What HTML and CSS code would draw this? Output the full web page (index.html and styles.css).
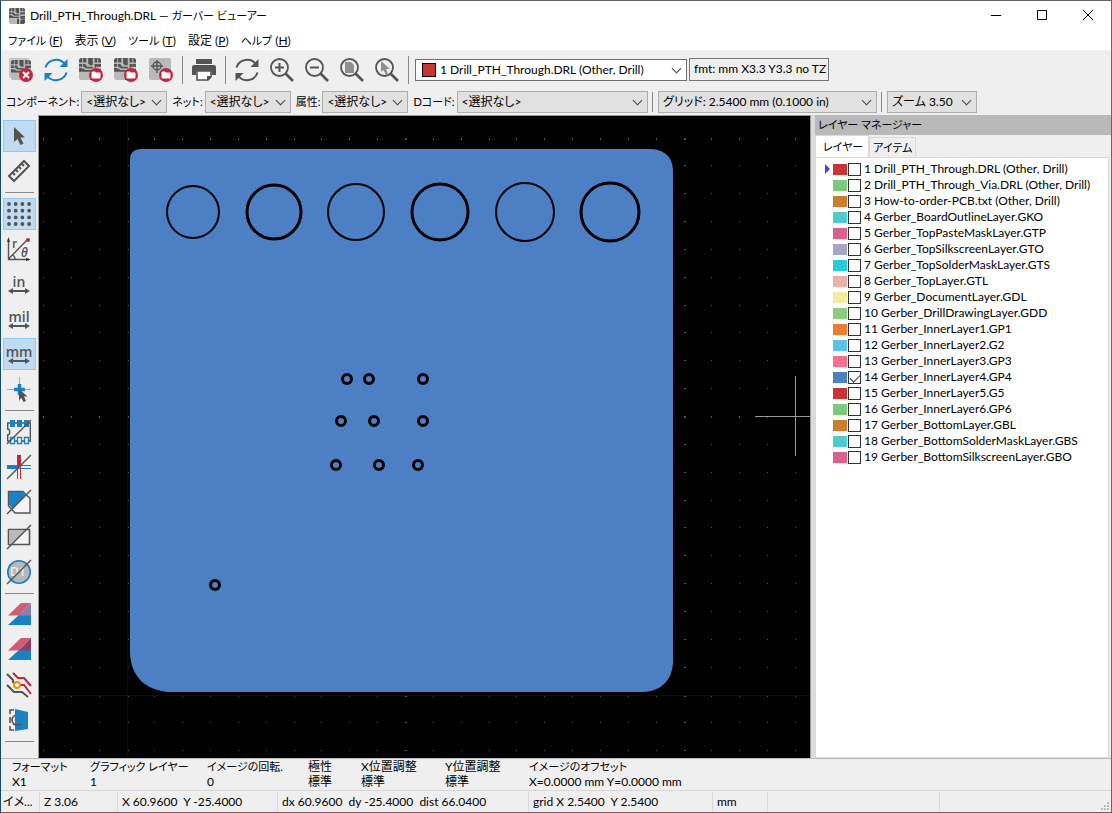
FILE: index.html
```
<!doctype html>
<html lang="ja">
<head>
	<meta charset="UTF-8">
	<title>Drill_PTH_Through.DRL — ガーバー ビューアー</title>
	<link rel="stylesheet" href="styles.css">
</head>
<body>
	<!-- shared icon shapes -->
	<svg class="defs" aria-hidden="true">
		<defs>
			<symbol id="board" viewBox="0 0 24 24">
				<rect width="24" height="24" rx="2.500" fill="#b9b9b9"/>
				<path fill="#545454" d="M2 0h6v5H0V2zM10 0h5v8h-3l-2-2zM17 0h5l2 2v3h-7zM0 6.500h7l2 3h6v2H8l-3-2H0zM17 6.500h7v3h-5l-2 2zM0 11h4l3 2h8v2H0zM17 12h7v4h-7zM12 16h3v8h-3zM17 19l2-2h5v5l-2 2h-5z"/>
				<path fill="none" stroke="#b9b9b9" d="M4 0v12M20.500 0v7"/>
			</symbol>
			<symbol id="reload" viewBox="0 0 24 24">
				<path fill="none" stroke="currentColor" stroke-width="2" d="M1.500 9.500C4 1 16-1 21 6.500M22.500 14.500C20 23 8 25 3 17.500"/>
				<path fill="currentColor" d="M23.500 1v8h-8zM.5 23v-8h8z"/>
			</symbol>
			<symbol id="lens" viewBox="0 0 24 24">
				<circle cx="9.500" cy="9.500" r="8.500" fill="none" stroke="#545454" stroke-width="1.800"/>
				<path stroke="#545454" stroke-width="2.600" d="M15.500 15.500l7.500 7.500"/>
			</symbol>
			<symbol id="folder" viewBox="0 0 14 14">
				<circle cx="7" cy="7" r="7" fill="#bf2641"/>
				<path fill="#fff" d="M2.500 5q0-1.500 1-1.500H6l1 1h3.500q1 0 1 1V9q0 1.500-1 1.500h-7q-1 0-1-1z"/>
			</symbol>
		</defs>
	</svg>
	<div class="window">
		<header class="titlebar">
			<svg class="app-icon" viewBox="0 0 24 24"><use href="#board"/></svg>
			<h1>Drill_PTH_Through.DRL — <span class="ja">ガーバー ビューアー</span></h1>
			<div class="win-buttons">
				<button aria-label="最小化"><svg viewBox="0 0 10 10"><path d="M0 5.500h10"/></svg></button>
				<button aria-label="最大化"><svg viewBox="0 0 10 10"><path d="M.5.5h9v9h-9z"/></svg></button>
				<button aria-label="閉じる"><svg viewBox="0 0 10 10"><path d="M0 0l10 10M10 0L0 10"/></svg></button>
			</div>
		</header>
		<nav class="menu">
			<a href="#"><span class="ja">ファイル</span> (<u>F</u>)</a>
			<a href="#">表示 (<u>V</u>)</a>
			<a href="#"><span class="ja">ツール</span> (<u>T</u>)</a>
			<a href="#">設定 (<u>P</u>)</a>
			<a href="#"><span class="ja">ヘルプ</span> (<u>H</u>)</a>
		</nav>
		<div class="toolbar">
			<button aria-label="全レイヤーを消去"><svg viewBox="0 0 24 24"><rect x="0" y="0" width="20" height="20" rx="2" fill="#c4c4c4"/><use href="#board" x="2" y="2" width="20" height="20"/><circle cx="17" cy="17" r="7" fill="#bf2641"/><path stroke="#fff" stroke-width="2" d="M14 14l6 6M20 14l-6 6"/></svg></button>
			<button class="blue" aria-label="全レイヤーを再読み込み"><svg viewBox="0 0 24 24"><use href="#reload"/></svg></button>
			<button aria-label="ガーバーファイルを開く"><svg viewBox="0 0 24 24"><use href="#board" width="22" height="22"/><use href="#folder" x="10" y="10" width="14" height="14"/></svg></button>
			<button aria-label="ジョブファイルを開く"><svg viewBox="0 0 24 24"><use href="#board" width="22" height="22"/><use href="#folder" x="10" y="10" width="14" height="14"/></svg></button>
			<button aria-label="ドリルファイルを開く"><svg viewBox="0 0 24 24"><rect width="22" height="22" rx="2" fill="#b9b9b9"/><path fill="none" stroke="#545454" stroke-width="1.400" d="M8 2v13M2 8h12M4 8a4 4 0 1 0 8 0a4 4 0 1 0-8 0"/><use href="#folder" x="10" y="10" width="14" height="14"/></svg></button>
			<span class="sep"></span>
			<button aria-label="印刷"><svg viewBox="0 0 24 24"><path fill="#545454" d="M4 1h16v5H4zM2 7h20a2 2 0 0 1 2 2v8h-4v-4H4v4H0V9a2 2 0 0 1 2-2z"/><path fill="#fff" stroke="#545454" stroke-width="1.600" d="M5 13h14v6l-3 3H5z"/><path fill="#545454" d="M19 18v1l-4 4v-5z"/></svg></button>
			<span class="sep"></span>
			<button aria-label="再描画"><svg viewBox="0 0 24 24"><use href="#reload"/></svg></button>
			<button aria-label="ズームイン"><svg viewBox="0 0 24 24"><use href="#lens"/><path stroke="#545454" stroke-width="2" d="M5 9.500h9M9.500 5v9"/></svg></button>
			<button aria-label="ズームアウト"><svg viewBox="0 0 24 24"><use href="#lens"/><path stroke="#545454" stroke-width="2" d="M5 9.500h9"/></svg></button>
			<button aria-label="全体表示"><svg viewBox="0 0 24 24"><use href="#lens"/><path fill="#8f8f8f" d="M5 4h6l3 3v8H5z"/></svg></button>
			<button aria-label="選択範囲をズーム"><svg viewBox="0 0 24 24"><use href="#lens"/><path fill="#8f8f8f" d="M6 3v11l2.500-2 2.500 5 2-1-2-5h4z"/></svg></button>
			<span class="sep"></span>
			<label class="pick layer-pick"><i class="swatch c-red"></i><select aria-label="レイヤー"><option>1 Drill_PTH_Through.DRL (Other, Drill)</option></select></label>
			<output class="fmt">fmt: mm X3.3 Y3.3 no TZ</output>
		</div>
		<div class="filters">
			<div class="filter-group">
				<label for="cmp">コンポーネント:</label>
				<span class="pick w-short"><select id="cmp"><option>&lt;選択なし&gt;</option></select></span>
				<label for="net">ネット:</label>
				<span class="pick w-short"><select id="net"><option>&lt;選択なし&gt;</option></select></span>
				<label for="attr">属性:</label>
				<span class="pick w-short"><select id="attr"><option>&lt;選択なし&gt;</option></select></span>
				<label for="dcode">Dコード:</label>
				<span class="pick w-dcode"><select id="dcode"><option>&lt;選択なし&gt;</option></select></span>
			</div>
			<span class="sep"></span>
			<span class="pick w-grid"><select aria-label="グリッド"><option>グリッド: 2.5400 mm (0.1000 in)</option></select></span>
			<span class="sep"></span>
			<span class="pick w-zoom"><select aria-label="ズーム"><option>ズーム 3.50</option></select></span>
		</div>
		<main class="work">
			<div class="tools">
				<button class="on" aria-label="選択"><svg viewBox="0 0 24 24"><path fill="#545454" d="M7 3v15l3.500-3 3 6 3-1.500-3-6H18z"/></svg></button>
				<button aria-label="計測"><svg viewBox="0 0 24 24"><path fill="none" stroke="#545454" stroke-width="2" d="M17 2l5 5L7 22l-5-5zM6 14l2 2M9 11l2 2M12 8l2 2M15 5l2 2"/></svg></button>
				<hr>
				<button class="on" aria-label="グリッド表示"><svg viewBox="0 0 24 24"><path stroke="#545454" stroke-width="3.800" stroke-linecap="round" stroke-dasharray="0 6.700" d="M2 2h21M2 8.700h21M2 15.400h21M2 22h21"/></svg></button>
				<button aria-label="極座標"><svg viewBox="0 0 24 24"><path fill="none" stroke="#545454" stroke-width="1.400" d="M1.500 2v20.500H22M1.500 22L20 3M6 18q2 2 2 4"/><path fill="#333" d="M1.500 0L3 5H0zM24 22.500L19 24v-3z"/><circle cx="21" cy="3" r="2" fill="#bf2641"/><text x="5" y="11" class="glyph">r</text><text x="14" y="20" class="glyph theta">θ</text></svg></button>
				<button class="unit" aria-label="インチ">in<svg viewBox="0 0 22 6"><path fill="#545454" d="M0 3l5-3v2h12V0l5 3-5 3V4H5v2z"/></svg></button>
				<button class="unit" aria-label="ミル">mil<svg viewBox="0 0 22 6"><path fill="#545454" d="M0 3l5-3v2h12V0l5 3-5 3V4H5v2z"/></svg></button>
				<button class="unit on" aria-label="ミリメートル">mm<svg viewBox="0 0 22 6"><path fill="#545454" d="M0 3l5-3v2h12V0l5 3-5 3V4H5v2z"/></svg></button>
				<button aria-label="カーソル形状"><svg viewBox="0 0 24 24"><path stroke="#aaa" d="M0 12.500h24M12.500 0v24"/><path stroke="#1a81c4" stroke-width="3.600" d="M7 12.500h11M12.500 7v11"/><path fill="#545454" d="M12 12v11l2.500-2 2 4 2.500-1-2-4.500h3.500z"/></svg></button>
				<hr>
				<button aria-label="フラッシュ"><svg viewBox="0 0 24 24"><path fill="none" stroke="#545454" stroke-width="1.400" d="M.7 3v6q2 0 2 3t-2 3v6h22.600V3z"/><path fill="#1a81c4" d="M3 0h5v7H3zM10 0h5v7h-5zM17 0h5v7h-5z"/><path fill="#fff" stroke="#1a81c4" stroke-width="1.400" d="M3.500 17.500h4v6h-4zM10.500 17.500h4v6h-4zM17.500 17.500h4v6h-4z"/><path stroke="#545454" stroke-width="1.400" d="M0 24L24 0"/></svg></button>
				<button aria-label="線"><svg viewBox="0 0 24 24"><path stroke="#1a81c4" stroke-width="4" d="M0 12h12"/><path stroke="#1a81c4" d="M12 10.500h12M12 13.500h12"/><path stroke="#bf2641" stroke-width="4" d="M12 0v12"/><path stroke="#bf2641" d="M10.500 12v12M13.500 12v12"/><path stroke="#545454" stroke-width="1.400" d="M0 24L24 0"/></svg></button>
				<button aria-label="ポリゴン"><svg viewBox="0 0 24 24"><path fill="#f4f4f4" stroke="#545454" stroke-width="1.400" d="M1.500 1.500H16l7 7V23H8l-6.500-7z"/><path fill="#1a81c4" d="M2 2h14l3 3L6 19l-4-4z"/><path stroke="#545454" stroke-width="1.400" d="M0 24L24 0"/></svg></button>
				<button aria-label="ネガティブ"><svg viewBox="0 0 24 24"><path fill="#f4f4f4" stroke="#545454" stroke-width="1.600" d="M1.500 4.500h21v15h-21z"/><path fill="#b9b9b9" d="M2 5h17L4 19H2z"/><path stroke="#545454" stroke-width="1.400" d="M0 24L24 0"/></svg></button>
				<button aria-label="Dコード"><svg viewBox="0 0 24 24"><circle cx="12" cy="12" r="11.200" fill="#b9b9b9" stroke="#1a81c4" stroke-width="1.600"/><text x="3" y="16" class="glyph dc">D1</text><path stroke="#545454" stroke-width="1.400" d="M0 24L24 0"/></svg></button>
				<hr>
				<button aria-label="差分表示"><svg viewBox="0 0 24 24"><path fill="#1a81c4" d="M13 11h11v11H1z"/><path fill="#cf5e73" d="M14 0h10L12 12.500H1z"/><path fill="#8781ac" d="M24 0v12.500H12z"/></svg></button>
				<button aria-label="XOR表示"><svg viewBox="0 0 24 24"><path fill="#1a81c4" d="M13 11h11v11H1z"/><path fill="#cf5e73" d="M14 0h10L12 12.500H1z"/><path fill="#8d3f67" d="M24 0v12.500H12z"/></svg></button>
				<button aria-label="ハイコントラスト"><svg viewBox="0 0 24 24"><path fill="none" stroke="#545454" stroke-width="2" d="M0 1l6 6v3M0 12l7 7h8l6 5"/><path fill="none" stroke="#bf2641" stroke-width="2" d="M6 0l5 5h6l7 8M13 12h4l7 9"/><circle cx="10" cy="12" r="3" fill="#fff" stroke="#f29100" stroke-width="2"/></svg></button>
				<button aria-label="反転表示"><svg viewBox="0 0 24 24"><path fill="none" stroke="#545454" stroke-width="1.600" d="M7 2H3v4M3 9v6M3 18v4h4M10 7a5 5 0 1 0 0 10"/><path fill="#1a81c4" d="M8 1l13 3v17L8 23z"/><path stroke="#545454" stroke-width="1.600" d="M6 16q4 2 8 0" fill="none"/></svg></button>
				<hr>
			</div>
			<div class="canvas">
				<svg viewBox="0 0 771 642" preserveAspectRatio="xMinYMin slice" role="img" aria-label="基板">
					<g id="dots"></g>
					<path stroke="#000084" d="M88.500 0v642M0 579.500h771"/>
					<path fill="#4d7fc4" d="M101 33H613Q634 35 634 56V547Q632 573 606 576H131C107 575 92 561 91 537V43Q91 34 101 33z"/>
					<g class="holes">
						<circle cx="154" cy="96" r="26" stroke-width="2"/>
						<circle cx="235" cy="96" r="27" stroke-width="3"/>
						<circle cx="317" cy="96" r="28" stroke-width="2"/>
						<circle cx="401" cy="96" r="28" stroke-width="3"/>
						<circle cx="486" cy="96" r="29" stroke-width="2"/>
						<circle cx="571" cy="96" r="29" stroke-width="3"/>
					</g>
					<g class="vias">
						<circle cx="308" cy="263" r="4.500"/><circle cx="330" cy="263" r="4.500"/><circle cx="384" cy="263" r="4.500"/>
						<circle cx="302" cy="305" r="4.500"/><circle cx="335" cy="305" r="4.500"/><circle cx="384" cy="305" r="4.500"/>
						<circle cx="297" cy="349" r="4.500"/><circle cx="340" cy="349" r="4.500"/><circle cx="379" cy="349" r="4.500"/>
						<circle cx="176" cy="469" r="4.500"/>
					</g>
					<path stroke="#999" d="M756.500 260v80M716 300.500h55"/>
				</svg>
			</div>
			<aside class="manager">
				<h2 class="ja">レイヤー マネージャー</h2>
				<div class="tabs ja"><button class="active">レイヤー</button><button>アイテム</button></div>
				<ul class="layers" id="layers"></ul>
			</aside>
		</main>
		<footer>
			<dl class="info">
				<div class="i1"><dt class="ja">フォーマット</dt><dd>X1</dd></div>
				<div class="i2"><dt class="ja">グラフィック レイヤー</dt><dd>1</dd></div>
				<div class="i3"><dt class="ja">イメージの回転.</dt><dd>0</dd></div>
				<div class="i4"><dt>極性</dt><dd>標準</dd></div>
				<div class="i5"><dt>X位置調整</dt><dd>標準</dd></div>
				<div class="i5"><dt>Y位置調整</dt><dd>標準</dd></div>
				<div><dt class="ja">イメージのオフセット</dt><dd>X=0.0000 mm Y=0.0000 mm</dd></div>
			</dl>
			<div class="status">
				<span>イメ...</span>
				<span>Z 3.06</span>
				<span>X 60.9600&nbsp; Y -25.4000</span>
				<span>dx 60.9600&nbsp; dy -25.4000&nbsp; dist 66.0400</span>
				<span>grid X 2.5400&nbsp; Y 2.5400</span>
				<span>mm</span>
				<span></span>
				<span><svg class="grip" viewBox="0 0 8 8"><path fill="#bbb" d="M6 0h2v2H6zM3 3h2v2H3zM6 3h2v2H6zM0 6h2v2H0zM3 6h2v2H3zM6 6h2v2H6z"/></svg></span>
			</div>
		</footer>
	</div>
	<script src="layers.js"></script>
</body>
</html>
```
FILE: styles.css
```
*{
	box-sizing: border-box;
}
html,body{
	height: 100%;
}
body{
	margin: 0;
	background: #efefef;
	color: #000;
	font: 12px/16px Lato,"Noto Sans CJK JP",sans-serif;
	font-feature-settings: "palt";
}
button,select,input{
	font: inherit;
	font-feature-settings: inherit;
	color: inherit;
	margin: 0;
	padding: 0;
	border: 0;
	background: none;
}
h1,h2,dl,dd,ul{
	margin: 0;
	padding: 0;
	font-size: 12px;
	font-weight: normal;
}
.ja{
	font-size: 11px;
}
.defs{
	position: absolute;
	width: 0;
	height: 0;
}
.window{
	height: 100%;
	display: flex;
	flex-direction: column;
	border: 1px solid #666;
	border-left-color: #134a6b;
	white-space: nowrap;
	overflow: hidden;
}
.titlebar{
	display: flex;
	align-items: center;
	height: 30px;
	flex: none;
	padding-left: 8px;
	gap: 5px;
	background: #fff;
}
.app-icon{
	width: 16px;
	height: 16px;
}
.win-buttons{
	margin-left: auto;
	display: flex;
}
.win-buttons button{
	width: 46px;
	height: 28px;
}
.win-buttons svg{
	width: 10px;
	height: 10px;
	fill: none;
	stroke: #000;
}
.menu{
	display: flex;
	align-items: center;
	gap: 12px;
	height: 19px;
	flex: none;
	padding-left: 7px;
	background: #fff;
}
.menu a{
	color: #000;
	text-decoration: none;
}
.toolbar,.filters,.filter-group{
	display: flex;
	align-items: center;
	flex: none;
}
.toolbar{
	height: 39px;
	padding-left: 2px;
}
.toolbar button{
	width: 35px;
	height: 32px;
	color: #545454;
}
.toolbar button.blue{
	color: #1a81c4;
}
.toolbar svg,.tools svg{
	display: block;
	width: 24px;
	height: 24px;
	margin: auto;
	overflow: visible;
}
.sep{
	width: 1px;
	height: 28px;
	margin: 0 3px 0 4px;
	background: #888;
}
.pick{
	position: relative;
	display: flex;
	align-items: center;
	height: 22px;
	border: 1px solid #adadad;
	background: #e1e1e1;
}
.pick select{
	appearance: none;
	flex: 1;
	min-width: 0;
	height: 20px;
	padding-left: 4px;
}
.pick::after{
	content: "";
	position: absolute;
	right: 6px;
	top: 5px;
	width: 6px;
	height: 6px;
	border: solid #444;
	border-width: 0 1px 1px 0;
	transform: rotate(45deg);
	pointer-events: none;
}
.layer-pick{
	width: 272px;
	margin-left: 3px;
	padding-left: 6px;
	border-color: #707070;
	background: #fff;
}
.swatch{
	width: 14px;
	height: 14px;
	border: 1px solid #000;
}
.c-red{
	background: #c83434;
}
.fmt{
	height: 23px;
	margin-left: 2px;
	padding: 2px 2px 0 4px;
	border: 1px solid #777;
}
.filters{
	height: 26px;
	padding-left: 5px;
	gap: 4px;
}
.filter-group{
	width: 642px;
	gap: 2px;
}
.filters label{
	margin-left: 3px;
	font-size: 11px;
}
.filters label:first-child{
	margin-left: 0;
}
.filters .sep{
	height: 20px;
	margin: 0 1px 0 0;
}
.w-short{
	width: 86px;
	flex: none;
}
.w-dcode{
	flex: 1;
}
.w-grid{
	width: 219px;
}
.w-zoom{
	width: 90px;
}
.work{
	flex: 1;
	min-height: 0;
	display: flex;
}
.tools{
	width: 37px;
	flex: none;
	padding: 5px 2px 0;
	overflow: hidden;
}
.tools button{
	display: block;
	width: 33px;
	height: 32px;
	margin-bottom: 3px;
	padding-right: 1px;
	border: 1px solid transparent;
}
.tools button.on{
	background: #c0dcf3;
	border-color: #90c8f6;
}
.tools hr{
	height: 1px;
	margin: 5px 2px;
	border: 0;
	background: #888;
}
.tools .unit{
	color: #545454;
	font: 600 14px/13px "Open Sans",sans-serif;
}
.tools .unit svg{
	width: 22px;
	height: 6px;
}
.glyph{
	font: 600 12px "Open Sans",sans-serif;
	fill: #545454;
}
.theta{
	font-style: italic;
}
.dc{
	fill: #eee;
}
.canvas{
	flex: 1;
	min-width: 0;
	border: solid #999;
	border-width: 1px 1px 0 1px;
	background: #000;
	overflow: hidden;
}
.canvas svg{
	display: block;
	width: 100%;
	height: 100%;
}
.holes circle,.vias circle{
	fill: none;
	stroke: #000;
}
.vias circle{
	stroke-width: 3px;
}
.manager{
	width: 300px;
	flex: none;
	display: flex;
	flex-direction: column;
	border-left: 4px solid #dcdcdc;
}
.manager h2{
	height: 20px;
	flex: none;
	padding: 2px 3px;
	font-size: 11px;
	background: #b9b9b9;
}
.tabs{
	display: flex;
	align-items: flex-end;
	height: 22px;
	flex: none;
}
.tabs button{
	height: 20px;
	padding: 0 3px;
	border: 1px solid #d9d9d9;
	border-bottom: 0;
}
.tabs .active{
	height: 22px;
	padding: 0 5px 0 7px;
	background: #fff;
}
.layers{
	flex: 1;
	min-height: 0;
	margin-right: 2px;
	padding: 3px 0 0 9px;
	border: solid #d9d9d9;
	border-width: 1px;
	background: #fff;
	list-style: none;
	overflow: hidden;
}
.layers label{
	display: flex;
	align-items: center;
	height: 16px;
}
.layers .mark{
	width: 7px;
	height: 10px;
	margin-right: 1px;
}
.layers .current{
	border: solid transparent;
	border-width: 5px 0 5px 5px;
	border-left-color: #4040ff;
}
.layers .color{
	width: 14px;
	height: 11px;
	margin-right: 1px;
}
.layers input{
	appearance: none;
	width: 13px;
	height: 13px;
	margin-right: 3px;
	border: 1px solid #333;
	background: #fff;
}
.layers input:checked::after{
	content: "";
	display: block;
	width: 9px;
	height: 5px;
	margin: 2px 0 0 1px;
	border: solid #333;
	border-width: 0 0 1px 1px;
	transform: rotate(-45deg);
}
footer{
	flex: none;
	border-top: 1px solid #bbb;
}
.info{
	display: flex;
	height: 31px;
	padding-left: 11px;
	line-height: 15px;
}
.i1{
	width: 78px;
}
.i2{
	width: 117px;
}
.i3{
	width: 101px;
}
.i4{
	width: 53px;
}
.i5{
	width: 84px;
}
.status{
	display: grid;
	grid-template-columns: 38px 78px 160px 251px 184px 55px 172px 1fr;
	height: 22px;
	padding-top: 1px;
	border-top: 1px solid #d7d7d7;
}
.status span{
	padding: 2px 0 0 4px;
	border-left: 1px solid #d7d7d7;
}
.status span:first-child{
	border: 0;
	padding-left: 2px;
}
.status span:last-child{
	display: flex;
	justify-content: flex-end;
	align-items: flex-end;
}
.grip{
	width: 8px;
	height: 8px;
	margin: 2px;
}
```
FILE: layers.js
```
var layers=[
	["Drill_PTH_Through.DRL (Other, Drill)","#c83434"],
	["Drill_PTH_Through_Via.DRL (Other, Drill)","#7fc87f"],
	["How-to-order-PCB.txt (Other, Drill)","#ce7d2c"],
	["Gerber_BoardOutlineLayer.GKO","#4fcbcb"],
	["Gerber_TopPasteMaskLayer.GTP","#db628b"],
	["Gerber_TopSilkscreenLayer.GTO","#a7a5c6"],
	["Gerber_TopSolderMaskLayer.GTS","#28ccd9"],
	["Gerber_TopLayer.GTL","#e8b2a7"],
	["Gerber_DocumentLayer.GDL","#f2eda1"],
	["Gerber_DrillDrawingLayer.GDD","#8dcb81"],
	["Gerber_InnerLayer1.GP1","#ed7c33"],
	["Gerber_InnerLayer2.G2","#5bc3eb"],
	["Gerber_InnerLayer3.GP3","#f76f8e"],
	["Gerber_InnerLayer4.GP4","#4d7fc4"],
	["Gerber_InnerLayer5.G5","#c83434"],
	["Gerber_InnerLayer6.GP6","#7fc87f"],
	["Gerber_BottomLayer.GBL","#ce7d2c"],
	["Gerber_BottomSolderMaskLayer.GBS","#4fcbcb"],
	["Gerber_BottomSilkscreenLayer.GBO","#db628b"]
];
var list=document.querySelector("#layers");
var str="";
for(var i=0;i<layers.length;i++){
	str+='<li><label><i class="mark'+(i==0?' current':'')+'"></i><i class="color" style="background:'+layers[i][1]+'"></i><input type="checkbox"'+(i==13?' checked':'')+'>'+(i+1)+' '+layers[i][0]+'</label></li>';
}
list.innerHTML=str;

// grid dots, every tenth row and column is heavier
var step=27.85;
var dots="";
for(var c=-3;c<25;c++){
	for(var r=-2;r<21;r++){
		var x=Math.floor(88+c*step);
		var y=Math.floor(579-r*step);
		dots+='<rect x="'+x+'" y="'+y+'" width="'+(c%10==0?2:1)+'" height="'+(r%10==0?2:1)+'" fill="#555"/>';
	}
}
document.querySelector("#dots").innerHTML=dots;
```
